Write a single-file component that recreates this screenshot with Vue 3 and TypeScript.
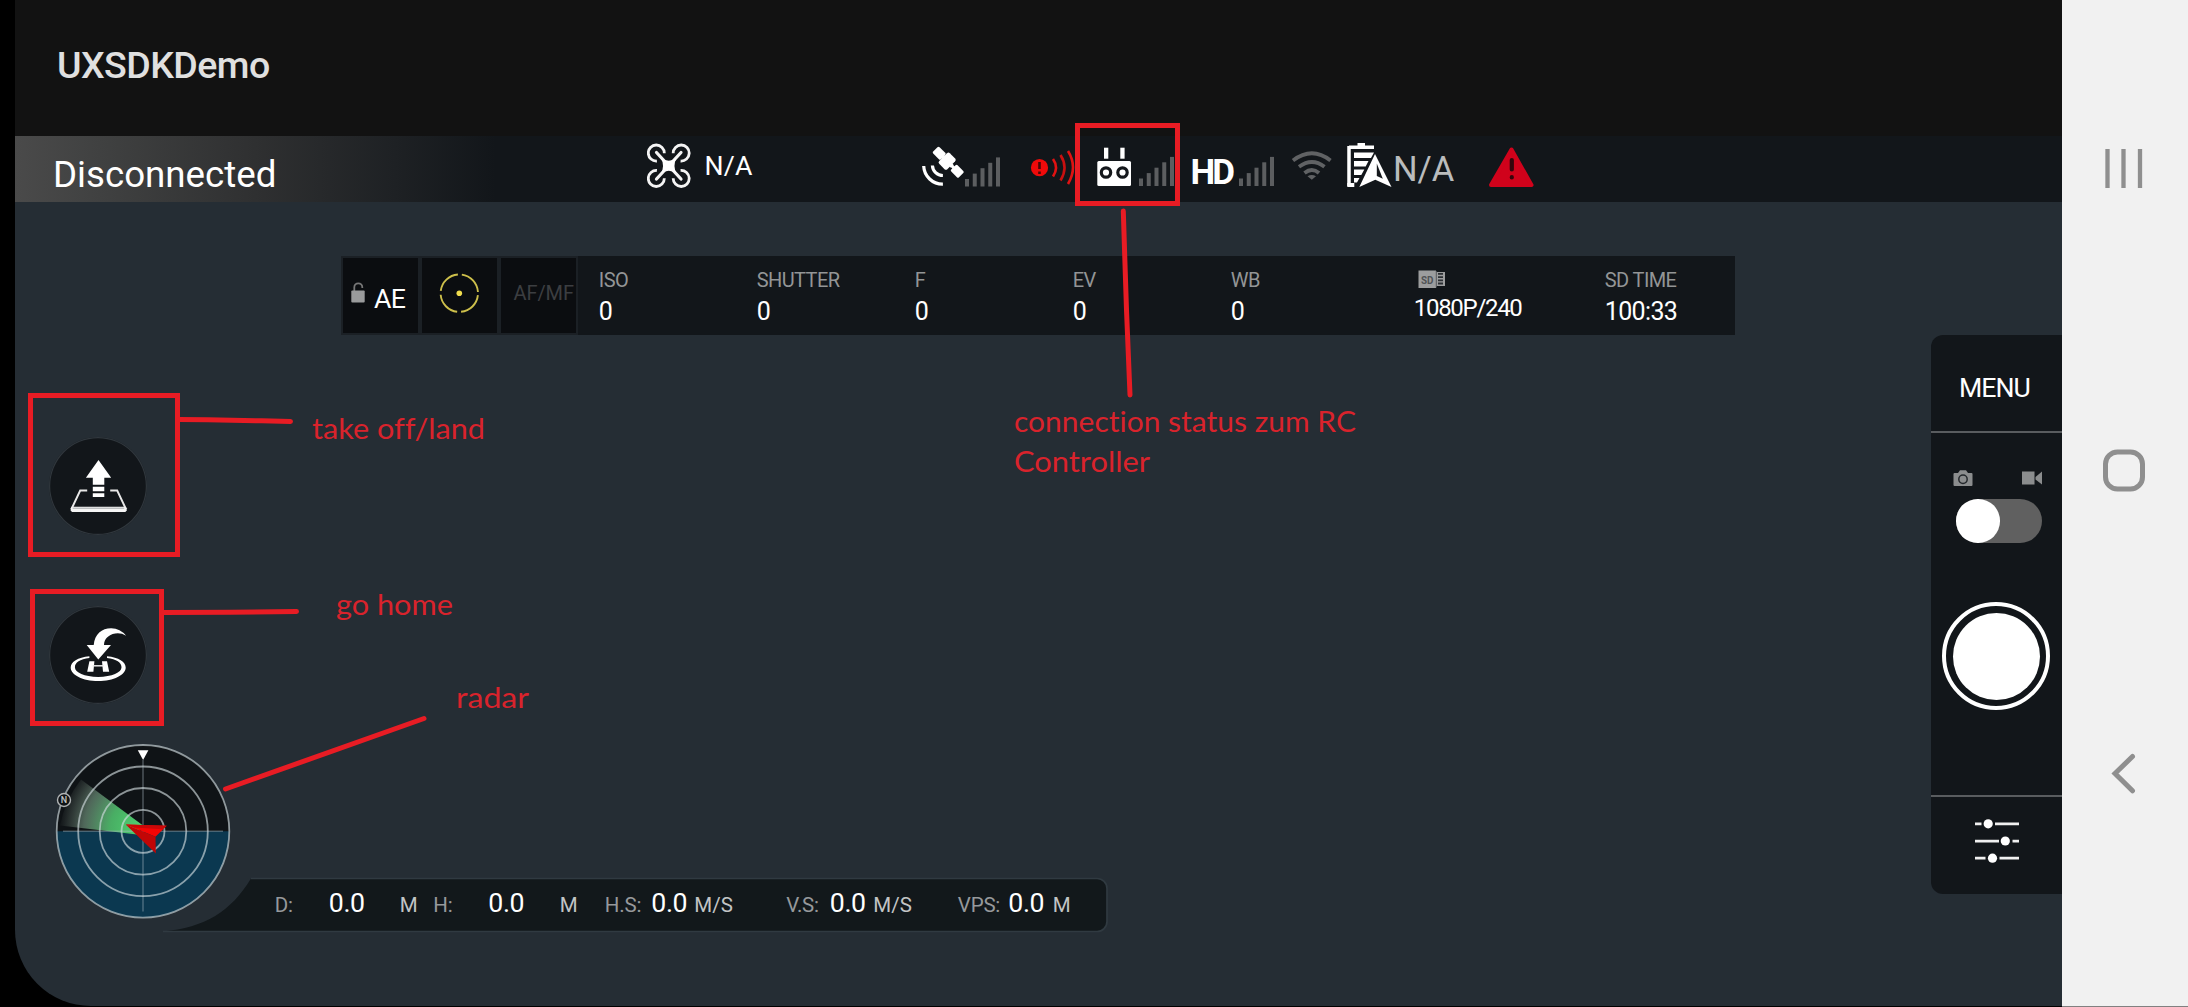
<script setup lang="ts">
interface Field { label: string; value: string; width: number }
interface Reading { text: string; kind: 'label' | 'value' | 'unit'; width: number }
interface Note { text: string; x: number; y: number; length: number }

const signal = [0, 1, 2, 3, 4].map((i) => ({ dx: i * 7.75, h: 7.5 + i * 5.4 }))

const fields: Field[] = [
  { label: 'ISO', value: '0', width: 158 },
  { label: 'SHUTTER', value: '0', width: 158 },
  { label: 'F', value: '0', width: 158 },
  { label: 'EV', value: '0', width: 158 },
  { label: 'WB', value: '0', width: 183 },
]

const readings: Reading[] = [
  { text: 'D:', kind: 'label', width: 54 },
  { text: '0.0', kind: 'value', width: 71 },
  { text: 'M', kind: 'unit', width: 33.5 },
  { text: 'H:', kind: 'label', width: 55 },
  { text: '0.0', kind: 'value', width: 71.5 },
  { text: 'M', kind: 'unit', width: 45 },
  { text: 'H.S:', kind: 'label', width: 46.5 },
  { text: '0.0', kind: 'value', width: 43 },
  { text: 'M/S', kind: 'unit', width: 92 },
  { text: 'V.S:', kind: 'label', width: 43.5 },
  { text: '0.0', kind: 'value', width: 43.5 },
  { text: 'M/S', kind: 'unit', width: 84.5 },
  { text: 'VPS:', kind: 'label', width: 50.5 },
  { text: '0.0', kind: 'value', width: 44.5 },
  { text: 'M', kind: 'unit', width: 30 },
]

const notes: Note[] = [
  { text: 'take off/land', x: 312, y: 439, length: 173 },
  { text: 'go home', x: 336, y: 615, length: 117 },
  { text: 'radar', x: 456, y: 708, length: 73 },
  { text: 'connection status zum RC', x: 1014, y: 432, length: 342 },
  { text: 'Controller', x: 1014, y: 472, length: 136 },
]

const rings = [21.5, 43.3, 64.8, 86.3]
</script>

<template>
  <div class="screen">
    <div class="app">
      <header class="title">UXSDKDemo</header>

      <div class="status">
        <span class="state">Disconnected</span>
        <svg width="44" height="66" viewBox="647 136 44 66" fill="none" stroke="#f4f4f4" stroke-width="2.6">
          <path d="M664.3 153.2a8 8 0 1 0-7.4 7.8M673.2 153.2a8 8 0 1 1 7.4 7.8M664.3 178.3a8 8 0 1 1-7.4-7.8M673.2 178.3a8 8 0 1 0 7.4-7.8" stroke-width="2.8" />
          <path d="M656.5 152.5l24.5 26.500M681 152.500l-24.500 26.500" stroke-width="3.2" stroke-linecap="round" />
          <path d="M661 158q7.800 5.500 15.500 0q-4 7.800 0 15.500q-7.700-5.500-15.500 0q4-7.700 0-15.500z" fill="#fff" stroke="none" />
        </svg>
        <span class="mode">N/A</span>
        <svg width="78" height="66" viewBox="922 136 78 66">
          <g fill="#fff" transform="rotate(45 947 161)">
            <rect x="930.5" y="156.500" width="11" height="9" rx="1.500" />
            <rect x="940.500" y="159" width="14" height="4" />
            <rect x="941.500" y="153.500" width="11.500" height="15" rx="2" />
            <rect x="956" y="156.500" width="11" height="9" rx="1.500" />
            <rect x="952" y="159.500" width="5" height="3" />
          </g>
          <g fill="none" stroke="#fff" stroke-width="3.200">
            <path d="M923.700 166a19 19 0 0 0 19.200 18.200" />
            <path d="M932.400 165.500a10.500 10.500 0 0 0 10.500 10" />
          </g>
          <rect v-for="b in signal" :key="b.dx" :x="965 + b.dx" :y="186.500 - b.h" width="4" :height="b.h" fill="#5c5e60" />
        </svg>
        <svg width="77" height="66" viewBox="1000 136 77 66">
          <circle cx="1039.500" cy="167.700" r="8.600" fill="#f00a0a" />
          <path d="M1039.500 162v7M1039.500 171.500v2.500" stroke="#4a0808" stroke-width="2.600" />
          <g fill="none" stroke="#e01212" stroke-width="2.600">
            <path d="M1053 159q6 8.500 0 17.500" />
            <path d="M1060.500 155q8 12.500 0 25.500" stroke="#c81010" />
            <path d="M1068 151q10 16 0 33" />
          </g>
        </svg>
        <svg width="103" height="66" viewBox="1077 136 103 66">
          <g fill="#fff">
            <rect x="1104" y="147.700" width="4.300" height="11" />
            <rect x="1120.300" y="147.700" width="4.300" height="11" />
            <rect x="1097.300" y="161" width="33.700" height="25" rx="1.500" />
          </g>
          <g fill="#fff" stroke="#15181c" stroke-width="3.200">
            <circle cx="1106" cy="172.500" r="4.700" />
            <circle cx="1122.500" cy="172.500" r="4.700" />
          </g>
          <rect v-for="b in signal" :key="b.dx" :x="1139 + b.dx" :y="186 - b.h" width="4" :height="b.h" fill="#5c5e60" />
        </svg>
        <span class="hd">HD</span>
        <svg width="36" height="66" viewBox="1239 136 36 66">
          <rect v-for="b in signal" :key="b.dx" :x="1239 + b.dx" :y="186 - b.h" width="4" :height="b.h" fill="#5c5e60" />
        </svg>
        <svg width="65" height="66" viewBox="1275 136 65 66" fill="none" stroke="#606264" stroke-width="3.800">
          <path d="M1293 160.500q19-14.500 37.500 0" />
          <path d="M1299 166.800q13-9.500 25.500 0" />
          <path d="M1304.500 173q7.500-6 14.500 0" />
          <path d="M1307.500 176.200q4.300-2.500 8.500 0l-4.200 3.500z" fill="#606264" stroke="none" />
        </svg>
        <svg width="53" height="66" viewBox="1340 136 53 66">
          <path d="M1349 147.300h25M1349 146v40" fill="none" stroke="#fff" stroke-width="3.500" />
          <path d="M1357.500 143h7.500v4h-7.500zM1347.300 183h7v4h-7zM1354 152.500h20l-3 5.500h-17zM1354 161h14.500l-2.800 5.500h-11.700zM1354 169.500h10.300l-3 5.500h-7.300zM1354 178h5.500l-2.500 4.500h-3z" fill="#fff" />
          <path d="M1375 154l16.500 33-16.200-7.300-16 7.300z" fill="#fff" />
          <path d="M1376.800 163.500v12.500l6 2.700z" fill="#15181c" />
        </svg>
        <span class="battery">N/A</span>
        <svg width="60" height="66" viewBox="1485 136 60 66">
          <path d="M1511.500 149.500l20 35.500h-40.500z" fill="#d0021b" stroke="#d0021b" stroke-width="4" stroke-linejoin="round" />
          <path d="M1511.800 160v9.500M1511.800 177.200v.3" stroke="#33060c" stroke-width="4.200" stroke-linecap="round" />
        </svg>
      </div>

      <div class="camera">
        <div class="cell">
          <svg class="lock" width="14" height="21" viewBox="0 0 14 21">
            <path d="M3.300 9V5.300a4 4 0 0 1 8 0V6" fill="none" stroke="#777" stroke-width="1.800" />
            <rect x=".3" y="8.500" width="13.400" height="12" rx="1" fill="#9a9b9c" />
          </svg>
          <span class="ae">AE</span>
        </div>
        <div class="cell">
          <svg width="75" height="75" viewBox="422 255.500 75 75">
            <circle cx="459.300" cy="290.700" r="18.700" fill="none" stroke="#cdbf4b" stroke-width="1.900" stroke-dasharray="25.300 4.073" stroke-dashoffset="-2.040" />
            <circle cx="459.300" cy="290.700" r="2.800" fill="#f0dc4e" />
          </svg>
        </div>
        <div class="cell focus">AF/MF</div>
        <div class="fields">
          <div v-for="f in fields" :key="f.label" class="field" :style="{ width: f.width + 'px' }">
            <span class="key">{{ f.label }}</span>
            <span class="val">{{ f.value }}</span>
          </div>
          <div class="field storage">
            <svg width="28" height="20" viewBox="0 0 28 20">
              <path d="M.5.500h17.500v1.500h9V16h-9v2H.5z" fill="#9c9d9e" />
              <path d="M18.300 1v16.500" stroke="#55585b" stroke-width="1" />
              <path d="M22.500 3v12.500" stroke="#2b2f33" stroke-width="5" stroke-dasharray="1.800 1.400" />
              <text x="3" y="14" textLength="12.500" lengthAdjust="spacingAndGlyphs" class="sd">SD</text>
            </svg>
            <span class="val res">1080P/240</span>
          </div>
          <div class="field">
            <span class="key">SD TIME</span>
            <span class="val">100:33</span>
          </div>
        </div>
      </div>

      <main class="body">
        <section class="left">
          <button class="round takeoff">
            <svg width="98" height="98" viewBox="49.300 436.700 98 98">
              <path d="M98.800 459.700l12.700 17.800h-6.900v7h-11.500v-7h-6.900zM93.100 486.500h11.500v4.500H93.100zM93.100 493h11.500v3.800H93.100z" fill="#fff" />
              <path d="M87.500 490.200h-7l-8.500 18M110.500 490.200h7l8.500 18" fill="none" stroke="#e8e8e8" stroke-width="1.900" />
              <path d="M72 506.500h53.700l1.300 1.500v2.200l-1.300 1.500H72.300l-1.300-1.500V508z" fill="#f5f5f5" />
              <path d="M73 507.900h51.500" stroke="#83868a" stroke-width=".7" />
            </svg>
          </button>
          <button class="round home">
            <svg width="98" height="98" viewBox="49.300 606 98 98">
              <path d="M94 645c1-11 8-16.800 17.500-16.800q9 .3 15 7.500q-5.500-3.200-11-2.200c-7 1.300-11 5.500-11.200 11.500h7L98.600 659.500 87 645z" fill="#fff" />
              <path d="M71 667.500c0 7.500 12 13.500 27.500 13.500s27.500-6 27.500-13.500c0-5.500-7-10-18.700-11.200v1.800c9.500 1.200 14.500 4.500 14.500 9.200 0 5.300-9.500 9.600-23.300 9.600s-23.300-4.300-23.300-9.600c0-4.700 5-8 14.500-9.200v-1.800C78 657.500 71 662 71 667.500z" fill="#fff" />
              <path d="M89.700 661.300h5l-1 10.500h-6.200zM102.300 661.300h5l2.200 10.500h-6.200z" fill="#fff" />
              <path d="M93 665.800h11" stroke="#e8e8e8" stroke-width="1.500" />
            </svg>
          </button>

          <div class="instruments">
            <svg class="radar" width="176" height="176" viewBox="55 743 176 176">
              <defs>
                <radialGradient id="beam" gradientUnits="userSpaceOnUse" cx="143" cy="829" r="82">
                  <stop offset="0" stop-color="#4fd672" />
                  <stop offset=".4" stop-color="#4cb668" stop-opacity=".95" />
                  <stop offset=".72" stop-color="#7aa087" stop-opacity=".6" />
                  <stop offset="1" stop-color="#808d84" stop-opacity=".05" />
                </radialGradient>
              </defs>
              <circle cx="143" cy="831.300" r="86.300" fill="#0f1316" />
              <path d="M56.700 831.300a86.300 86.300 0 0 0 172.600 0z" fill="#0b3850" />
              <path d="M143 825.500L81 779.500Q65 800 60 825.500L137 834.500z" fill="url(#beam)" />
              <path d="M143 760v151.500M63 831.300h160" stroke="#a9b8c0" stroke-opacity=".4" stroke-width="1.500" />
              <circle v-for="r in rings" :key="r" cx="143" cy="831.300" :r="r" fill="none" stroke="#d0dadd" stroke-opacity=".65" stroke-width="1.800" />
              <path d="M137.800 750.300h10.600l-5.300 9.700z" fill="#fff" />
              <circle cx="64" cy="800" r="6.500" fill="#111417" stroke="#b0b3b4" stroke-width="1.400" />
              <text x="64" y="803.200" text-anchor="middle" class="north">N</text>
              <path d="M125.700 824.500l41 1.300-11.200 11z" fill="#f50505" />
              <path d="M125.700 824.500l29.800 12.300.3 16.700z" fill="#c20606" />
              <path d="M125.700 824.500l41 1.300-4 3.500-28-1.700z" fill="#c90808" />
            </svg>
            <div class="telemetry">
              <svg class="plate" width="946" height="56" viewBox="162 877.500 946 56">
                <path d="M251 879h846a10 10 0 0 1 10 10v33a10 10 0 0 1-10 10H163C205 928 231 912 251 879z" fill="#12181b" />
                <path d="M251 879h846a10 10 0 0 1 10 10v33a10 10 0 0 1-10 10H163" fill="none" stroke="#303a41" stroke-width="1.700" />
              </svg>
              <span v-for="(r, i) in readings" :key="i" :class="r.kind" :style="{ width: r.width + 'px' }">{{ r.text }}</span>
            </div>
          </div>
        </section>

        <aside class="panel">
          <div class="menu">MENU</div>
          <div class="capture">
            <div class="modes">
              <svg width="20" height="17" viewBox="0 0 20 17">
                <path d="M1.500 3H5l2-2.700h6L15 3h3.500q1 0 1 1v11q0 1-1 1h-17q-1 0-1-1V4q0-1 1-1z" fill="#8b8d8e" />
                <circle cx="10" cy="9.200" r="4.200" fill="#8b8d8e" stroke="#24282c" stroke-width="1.500" />
              </svg>
              <svg width="22" height="17" viewBox="0 0 22 17">
                <path d="M1 1.500h12.500v13H1zM14.500 7l6.500-5.500v13L14.500 9.500z" fill="#8b8d8e" />
              </svg>
            </div>
            <div class="toggle"><i></i></div>
            <div class="shutter"><i></i></div>
          </div>
          <div class="tune">
            <svg width="46" height="46" viewBox="1974 817 46 46">
              <path d="M1975 822.800h6.500M1995 822.800h24M1975 840.200h24M2012.500 840.200h6.500M1975 857.200h10.500M1999.500 857.200h19.500" stroke="#f0f0f0" stroke-width="2.800" />
              <g fill="#fff">
                <circle cx="1988.200" cy="822.800" r="4.600" />
                <circle cx="2005.300" cy="840" r="4.600" />
                <circle cx="1992.500" cy="857.200" r="4.600" />
              </g>
            </svg>
          </div>
        </aside>
      </main>
    </div>

    <nav class="nav">
      <svg width="126" height="1006" viewBox="2062 0 126 1006" fill="none" stroke="#8f8f8f">
        <path d="M2107.500 149v39M2123.500 149v39M2140 149v39" stroke-width="4.300" />
        <rect x="2105.500" y="452" width="37" height="37" rx="12" stroke-width="5" />
        <path d="M2132.500 756.500L2115 773.500l17.500 17.300" stroke-width="5" stroke-linecap="round" />
      </svg>
    </nav>

    <svg class="notes" width="2188" height="1007" viewBox="0 0 2188 1007">
      <g fill="none" stroke="#e81c24" stroke-width="5" stroke-linecap="round">
        <g stroke-linecap="butt">
          <rect x="1077.500" y="125.500" width="100" height="78" />
          <rect x="30.500" y="395.500" width="147" height="159" />
          <rect x="32.500" y="591.500" width="129" height="132" />
        </g>
        <path d="M179 419.500L208 419.800 262 420.800 290.500 421.500" />
        <path d="M163 612.500L230 612.300 296.500 611.500" />
        <path d="M225.500 789L424 718.500" />
        <path d="M1123.300 211L1124.700 255 1126.500 310 1130 395" />
      </g>
      <text v-for="n in notes" :key="n.text" :x="n.x" :y="n.y" :textLength="n.length" lengthAdjust="spacingAndGlyphs">{{ n.text }}</text>
    </svg>
  </div>
</template>

<style>
body { margin: 0; background: #000; }
</style>

<style scoped>
.screen {
  position: relative;
  display: flex;
  box-sizing: border-box;
  width: 2188px;
  height: 1007px;
  padding-left: 15px;
  background: #000;
  font-family: Roboto, "Liberation Sans", sans-serif;
  color: #fff;
  overflow: hidden;
  white-space: nowrap;
}
svg { display: block; flex: none; }
.app {
  display: flex;
  flex-direction: column;
  width: 2047px;
  height: 1006px;
  background: #252d34;
  border-bottom-left-radius: 76px;
  overflow: hidden;
}
.title {
  height: 136px;
  box-sizing: border-box;
  padding-left: 42px;
  background: #121212;
  color: #e0e0e0;
  font-size: 37.500px;
  font-weight: 500;
  line-height: 130px;
  letter-spacing: -.55px;
}
.status {
  display: flex;
  height: 66px;
  line-height: 66px;
  background: linear-gradient(90deg, #4a4a4a 0, #404141 85px, #2f3031 240px, #1e2124 380px, #12161a 480px);
}
.state { width: 632px; box-sizing: border-box; padding-left: 38px; font-size: 36.700px; line-height: 78px; }
.mode { width: 231px; box-sizing: border-box; padding-left: 13.500px; font-size: 26.700px; line-height: 60px; letter-spacing: .2px; }
.hd { width: 59px; box-sizing: border-box; padding-left: 10.500px; font-size: 35px; font-weight: 700; line-height: 74px; letter-spacing: -3px; }
.battery { width: 92px; padding-left: 0; font-size: 34.500px; line-height: 66px; color: #babcbd; }
.camera {
  display: flex;
  width: 1394px;
  height: 79px;
  margin: 54px 0 0 325.500px;
  background: #12161a;
}
.cell {
  display: flex;
  box-sizing: border-box;
  width: 79px;
  height: 79px;
  border: 2px solid #1b2025;
  background: #0b0d10;
}
.lock { margin: 24px 0 0 8px; }
.ae { margin-left: 9.500px; font-size: 26.700px; line-height: 82px; letter-spacing: -.6px; }
.focus { padding-left: 13px; color: #3c3e41; font-size: 20px; line-height: 71px; letter-spacing: -.1px; }
.fields { display: flex; padding-left: 21.300px; }
.field { display: flex; flex-direction: column; }
.key { height: 46px; color: #939596; font-size: 20px; line-height: 48px; letter-spacing: -.6px; }
.val { font-size: 25px; line-height: 15px; margin-top: 0; height: 33px; padding-top: 1px; letter-spacing: -.65px; }
.storage { width: 191px; }
.storage svg { margin: 14px 0 0 4px; }
.field .res { font-size: 24px; margin-top: 9.500px; letter-spacing: -1.300px; }
.key + .val { padding-top: 0; margin-top: 1.500px; }
.sd { font: 700 10px Roboto, sans-serif; fill: #505356; }
.body { display: flex; justify-content: space-between; flex: 1; }
.left { display: flex; flex-direction: column; }
.round {
  width: 98px;
  height: 98px;
  margin-left: 34.300px;
  padding: 0;
  border: 0;
  border-radius: 50%;
  background: #12161a;
  box-shadow: inset 0 0 0 1.200px #30373d;
}
.takeoff { margin-top: 101.700px; }
.home { margin-top: 71.300px; }
.instruments { display: flex; margin: 39px 0 0 40px; }
.radar { position: relative; z-index: 1; }
.telemetry {
  position: relative;
  display: flex;
  align-items: baseline;
  box-sizing: border-box;
  width: 946px;
  height: 56px;
  margin: 134.500px 0 0 -69px;
  padding-left: 112.800px;
  line-height: 53px;
}
.telemetry span { position: relative; flex: none; }
.plate { position: absolute; left: 0; top: 0; }
.label { color: #96999b; font-size: 20.500px; letter-spacing: -.2px; }
.value { color: #fff; font-size: 26.700px; letter-spacing: -.4px; }
.unit { color: #c2c4c5; font-size: 20.500px; }
.panel {
  display: flex;
  flex-direction: column;
  width: 131px;
  height: 558.500px;
  border-radius: 12px 0 0 12px;
  background: #12161a;
}
.menu { height: 98px; box-sizing: border-box; padding-left: 28px; border-bottom: 2px solid #595c5f; font-size: 26.700px; line-height: 106px; letter-spacing: -1px; }
.capture { display: flex; flex-direction: column; flex: 1; }
.modes { display: flex; justify-content: space-between; width: 90px; margin: 37px 0 0 22.300px; }
.toggle { width: 86px; height: 43.500px; margin: 12px 0 0 25px; border-radius: 22px; background: #606060; }
.toggle i { display: block; width: 43.500px; height: 43.500px; border-radius: 50%; background: #fff; }
.shutter {
  display: flex;
  align-items: center;
  justify-content: center;
  box-sizing: border-box;
  width: 108px;
  height: 108px;
  margin: 59.500px 0 0 11px;
  border: 4.500px solid #fff;
  border-radius: 50%;
}
.shutter i { width: 87px; height: 87px; border-radius: 50%; background: #fff; }
.tune { height: 98.500px; box-sizing: border-box; padding: 20.500px 0 0 43px; border-top: 2px solid #595c5f; }
.nav { width: 126px; height: 1006px; background: #f1f1f1; border-bottom: 1px solid #808080; }
.north { font: 500 9px Roboto, sans-serif; fill: #c4c6c7; }
.notes { position: absolute; left: 0; top: 0; z-index: 2; }
.notes text { font: 29.500px Lato, "Open Sans", sans-serif; font-variant-ligatures: none; fill: #d9232c; }
</style>
